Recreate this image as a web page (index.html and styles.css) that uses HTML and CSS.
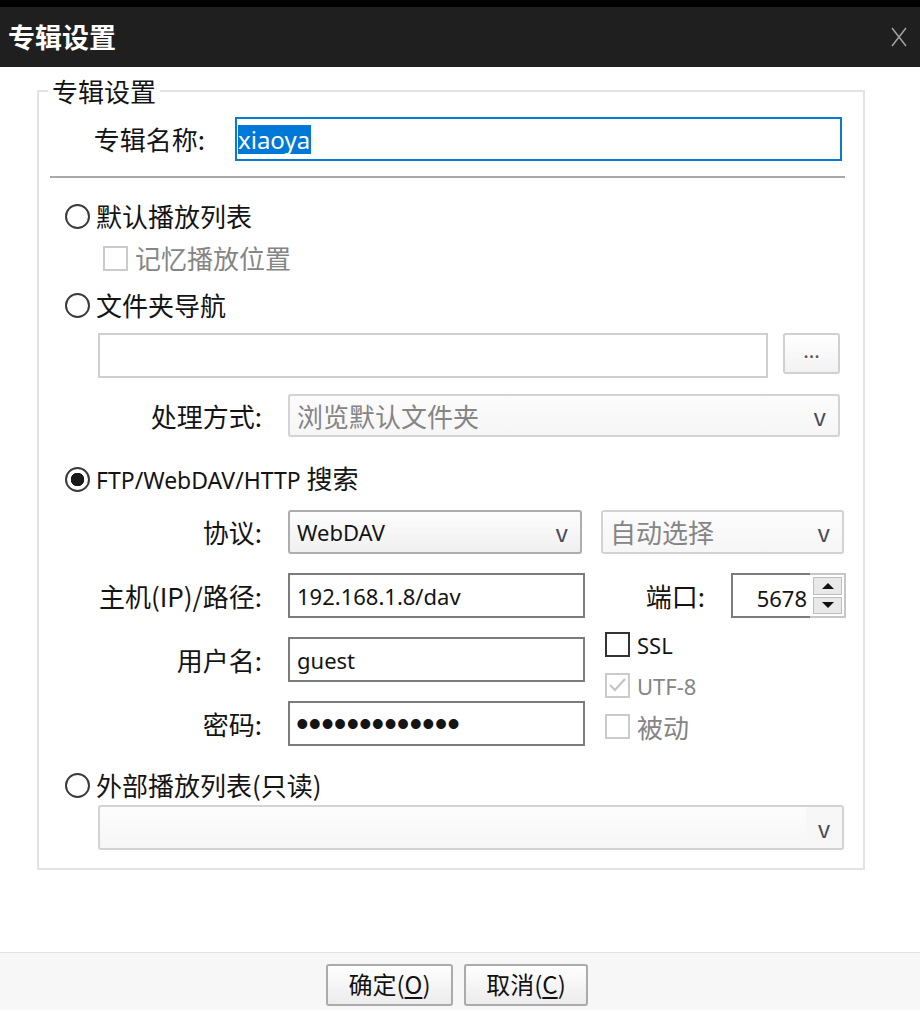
FILE: index.html
```html
<!DOCTYPE html>
<html lang="zh-CN">
<head>
<meta charset="utf-8">
<title>专辑设置</title>
<link rel="stylesheet" href="styles.css">
</head>
<body>
<div class="window">
  <header class="titlebar">
    <span class="title">专辑设置</span>
    <svg class="close" width="18" height="20" viewBox="0 0 18 20"><path d="M2 1 L16 19 M16 1 L2 19" stroke="#a3a3a3" stroke-width="1.5" fill="none"/></svg>
  </header>
  <main class="main">
    <fieldset class="group">
      <legend class="legend">专辑设置</legend>

      <div class="row name-row">
        <span class="lbl lbl-name">专辑名称:</span>
        <div class="field focused"><span class="selected en-l">xiaoya</span></div>
      </div>

      <div class="sep"></div>

      <div class="opt opt-1"><span class="radio"></span><span>默认播放列表</span></div>
      <div class="chk-row disabled"><span class="box"></span><span>记忆播放位置</span></div>

      <div class="opt opt-2"><span class="radio"></span><span>文件夹导航</span></div>
      <div class="row folder-row">
        <div class="field light folder-field"></div>
        <div class="more-btn">...</div>
      </div>
      <div class="row proc-row">
        <span class="lbl lbl-wide">处理方式:</span>
        <div class="select disabled proc-select"><span>浏览默认文件夹</span><span class="arrow">v</span></div>
      </div>

      <div class="opt opt-3"><span class="radio checked"></span><span><span class="en en-m">FTP/WebDAV/HTTP</span> 搜索</span></div>
      <div class="ftp-grid">
        <span class="lbl lbl-wide">协议:</span>
        <div class="select proto-select"><span class="en">WebDAV</span><span class="arrow">v</span></div>
        <div class="cell">
          <div class="select disabled auto-select"><span>自动选择</span><span class="arrow">v</span></div>
        </div>

        <span class="lbl lbl-wide">主机(IP)/路径:</span>
        <div class="field dark"><span class="en">192.168.1.8/dav</span></div>
        <div class="cell port-cell">
          <span class="lbl">端口:</span>
          <div class="spin">
            <div class="spin-text"><span class="en">5678</span></div>
            <div class="spin-btns">
              <div class="spin-btn"><span class="tri up"></span></div>
              <div class="spin-btn"><span class="tri down"></span></div>
            </div>
          </div>
        </div>

        <span class="lbl lbl-wide">用户名:</span>
        <div class="field dark"><span class="en">guest</span></div>
        <div class="checks">
          <div class="chk"><span class="box enabled"></span><span class="en">SSL</span></div>
          <div class="chk disabled"><span class="box checked"><svg width="21" height="21" viewBox="0 0 21 21"><path d="M3 10 L8 15 L18 4" stroke="#c2c2c2" stroke-width="2" fill="none"/></svg></span><span class="en">UTF-8</span></div>
          <div class="chk disabled"><span class="box"></span><span>被动</span></div>
        </div>

        <span class="lbl lbl-wide">密码:</span>
        <div class="field dark password">•••••••••••••</div>
      </div>

      <div class="opt opt-4"><span class="radio"></span><span>外部播放列表(只读)</span></div>
      <div class="select ext-select"><span></span><span class="arrow arrow-box">v</span></div>
    </fieldset>
  </main>
  <footer class="footer">
    <div class="btn btn-ok">确定(<u>O</u>)</div>
    <div class="btn btn-cancel">取消(<u>C</u>)</div>
  </footer>
</div>
</body>
</html>
```
FILE: styles.css
```css
html, body {
  margin: 0;
  padding: 0;
}
body {
  width: 920px;
  height: 1010px;
  overflow: hidden;
  background: #fff;
  color: #141414;
  font-family: "Noto Sans CJK SC", "Noto Sans", sans-serif;
  font-size: 26px;
  line-height: 30px;
}
.en {
  font-family: "Noto Sans", "Noto Sans CJK SC", sans-serif;
  font-size: 22px;
}
.en-m {
  font-size: 23px;
}
.en-l {
  font-family: "Noto Sans", "Noto Sans CJK SC", sans-serif;
  font-size: 24px;
}
.window {
  display: flex;
  flex-direction: column;
  height: 1010px;
}
.titlebar {
  height: 60px;
  border-top: 7px solid #000;
  background: #1f1f1f;
  display: flex;
  align-items: center;
  justify-content: space-between;
  padding: 0 12px 0 8px;
}
.title {
  color: #fff;
  font-size: 27px;
  font-weight: 700;
  line-height: 32px;
}
.close {
  display: block;
}
.main {
  flex: 1;
}
.group {
  box-sizing: border-box;
  width: 828px;
  margin: 9px 0 0 37px;
  padding: 0 0 18px 0;
  border: 2px solid #e3e3e3;
  min-width: 0;
}
.legend {
  margin-left: 9px;
  padding: 0 4px;
  font-size: 26px;
  line-height: 30px;
}
.row {
  display: flex;
  align-items: center;
}
.lbl {
  white-space: nowrap;
}
.lbl-name {
  width: 166px;
  text-align: right;
  margin-right: 30px;
}
.lbl-wide {
  width: 223px;
  padding-right: 26px;
  text-align: right;
}
.name-row {
  margin-top: 11px;
}
.field {
  box-sizing: border-box;
  height: 45px;
  display: flex;
  align-items: center;
  padding-left: 7px;
  background: #fff;
  white-space: nowrap;
}
.focused {
  width: 607px;
  height: 44px;
  border: 2px solid #0a79d6;
  padding-left: 1px;
}
.selected {
  background: #0078d7;
  color: #fff;
  line-height: 29px;
  padding-right: 1px;
}
.light {
  border: 2px solid #cfcfcf;
}
.dark {
  width: 297px;
  border: 2px solid #7c7c7c;
}
.sep {
  margin: 15px 0 0 11px;
  width: 795px;
  border-top: 2px solid #a9a9a9;
}
.opt {
  display: flex;
  align-items: center;
  height: 30px;
  margin-left: 26px;
  gap: 6px;
}
.opt-1 { margin-top: 23px; }
.opt-2 { margin-top: 17px; }
.opt-3 { margin-top: 27px; }
.opt-4 { margin-top: 24px; }
.radio {
  box-sizing: border-box;
  width: 25px;
  height: 25px;
  border: 2px solid #3a3a3a;
  border-radius: 50%;
  background: #fff;
  flex: none;
}
.radio.checked {
  background: radial-gradient(circle, #1a1a1a 0 6.5px, #fff 7px);
}
.box {
  box-sizing: border-box;
  width: 25px;
  height: 25px;
  border: 2px solid #cbcbcb;
  background: #fff;
  flex: none;
  display: flex;
  align-items: center;
  justify-content: center;
}
.box.enabled {
  border-color: #333;
}
.disabled {
  color: #858585;
}
.chk-row {
  display: flex;
  align-items: center;
  height: 30px;
  margin: 12px 0 0 64px;
  gap: 7px;
}
.folder-row {
  margin: 13px 0 0 59px;
  align-items: flex-start;
}
.folder-field {
  width: 670px;
  height: 45px;
}
.more-btn {
  box-sizing: border-box;
  width: 57px;
  height: 41px;
  margin-left: 15px;
  border: 2px solid #d0d0d0;
  border-radius: 3px;
  background: linear-gradient(#ffffff, #f2f2f2);
  color: #555;
  font-size: 20px;
  line-height: 30px;
  text-align: center;
}
.proc-row {
  margin-top: 16px;
}
.select {
  box-sizing: border-box;
  height: 44px;
  display: flex;
  align-items: center;
  justify-content: space-between;
  padding: 0 12px 0 7px;
  border: 2px solid #adadad;
  border-radius: 3px;
  background: linear-gradient(#fdfdfd, #f0f0f0);
  white-space: nowrap;
}
.select.disabled {
  border-color: #d3d3d3;
  background: linear-gradient(#fcfcfc, #f6f6f6);
}
.arrow {
  color: #4a4a5a;
  font-size: 24px;
}
.proc-select {
  width: 552px;
  height: 43px;
}
.ftp-grid {
  display: grid;
  grid-template-columns: 249px 297px 1fr;
  grid-template-rows: 44px 45px 45px 45px;
  row-gap: 19px;
  align-items: center;
  margin-top: 16px;
}
.proto-select {
  width: 294px;
}
.cell {
  display: flex;
  align-items: center;
  height: 100%;
}
.auto-select {
  width: 243px;
  margin-left: 16px;
  padding-left: 7px;
}
.port-cell {
  justify-content: flex-end;
  padding-right: 17px;
}
.port-cell .lbl {
  margin-right: 26px;
}
.spin {
  display: flex;
  width: 115px;
  height: 45px;
  box-sizing: border-box;
}
.spin-text {
  flex: 1;
  box-sizing: border-box;
  border: 2px solid #7c7c7c;
  border-right: none;
  text-align: right;
  padding-right: 3px;
  line-height: 41px;
  background: #fff;
}
.spin-btns {
  box-sizing: border-box;
  width: 36px;
  border: 2px solid #c6c6c6;
  border-left: none;
  padding: 2px 2px 2px 3px;
  display: flex;
  flex-direction: column;
  gap: 2px;
  background: #fff;
}
.spin-btn {
  flex: 1;
  border: 1px solid #bdbdbd;
  background: #e9e9e9;
  display: flex;
  align-items: center;
  justify-content: center;
}
.tri {
  width: 0;
  height: 0;
  border-left: 6px solid transparent;
  border-right: 6px solid transparent;
}
.tri.up {
  border-bottom: 6px solid #111;
}
.tri.down {
  border-top: 6px solid #111;
}
.checks {
  grid-column: 3;
  grid-row: 3 / span 2;
  align-self: start;
  margin: -5px 0 0 20px;
  display: flex;
  flex-direction: column;
  gap: 16px;
}
.chk {
  display: flex;
  align-items: center;
  height: 25px;
  gap: 7px;
}
.password {
  font-family: "Liberation Sans", sans-serif;
  font-size: 36px;
  padding-left: 6px;
}
.ext-select {
  width: 746px;
  height: 45px;
  margin: 5px 0 0 59px;
  border-color: #d3d3d3;
  padding-right: 0;
  background: linear-gradient(#fdfdfd, #f6f6f6);
}
.arrow-box {
  height: 41px;
  width: 36px;
  line-height: 41px;
  text-align: center;
  background: #f7f7f7;
}
.footer {
  height: 46px;
  border-top: 1px solid #e3e3e3;
  background: #f7f7f7;
  padding: 11px 6px 0 0;
  display: flex;
  justify-content: center;
  align-items: flex-start;
  gap: 11px;
}
.btn {
  box-sizing: border-box;
  height: 42px;
  border: 2px solid #ababab;
  border-radius: 3px;
  background: linear-gradient(#ffffff, #ececec);
  font-size: 24px;
  line-height: 36px;
  text-align: center;
  color: #111;
}
.btn-ok {
  width: 127px;
}
.btn-cancel {
  width: 124px;
}
.btn u {
  text-underline-offset: 3px;
}
```
